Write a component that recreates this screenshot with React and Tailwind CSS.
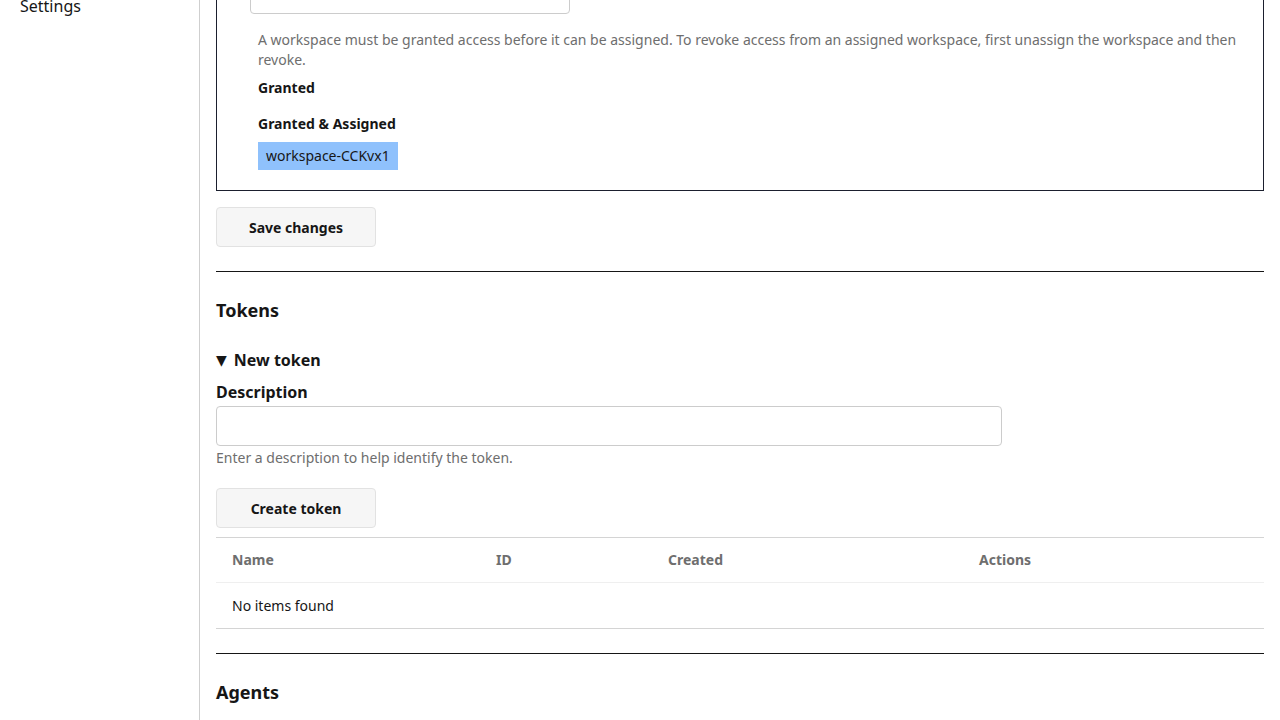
const columns = [
  { label: "Name", width: "w-[264px]" },
  { label: "ID", width: "w-[172px]" },
  { label: "Created", width: "w-[311px]" },
  { label: "Actions", width: "flex-1" },
];

const Button = ({ children }) => (
  <button
    type="button"
    className="flex h-10 w-40 items-center justify-center rounded border border-[#e2e2e2] bg-[#f6f6f6] pt-px text-sm font-bold text-[#161616]"
  >
    {children}
  </button>
);

const App = () => {
  return (
    <div
      className="flex h-screen overflow-hidden bg-white text-[#161616]"
      style={{ fontFamily: '"Noto Sans", "DejaVu Sans", sans-serif' }}
    >
      <aside className="w-[200px] shrink-0 border-r border-[#cfcfcf]">
        <nav className="-mt-[6px] px-5">
          <p className="text-base leading-6">Settings</p>
        </nav>
      </aside>

      <main className="flex-1 px-4">
        <div className="-mt-[60px] border border-[#1b1f2e] pb-5 pr-5 pt-[33px]">
          <div className="ml-[33px] h-10 w-80 rounded border border-[#cccccc]" />
          <div className="pl-[41px]">
            <p className="mt-4 text-sm leading-5 text-[#6e6e6e]">
              A workspace must be granted access before it can be assigned. To
              revoke access from an assigned workspace, first unassign the
              workspace and then revoke.
            </p>
            <p className="mt-2 text-sm font-bold leading-5">Granted</p>
            <p className="mt-4 text-sm font-bold leading-5">Granted &amp; Assigned</p>
            <div className="mt-2 flex">
              <span className="flex h-7 items-center bg-[#8fc1fc] px-2 text-sm text-[#161616]">
                workspace-CCKvx1
              </span>
            </div>
          </div>
        </div>

        <div className="mt-4">
          <Button>Save changes</Button>
        </div>

        <hr className="mt-6 border-t border-[#161616]" />

        <h2 className="mt-6 text-lg font-bold leading-7">Tokens</h2>

        <div className="mt-6 flex items-center gap-[7px] text-base font-bold leading-6">
          <span className="text-[14px] leading-6">▼</span>
          <span>New token</span>
        </div>

        <label className="mt-2 block text-base font-bold leading-6">Description</label>
        <input
          type="text"
          className="mt-[2px] block h-10 w-[786px] rounded border border-[#cccccc] px-2 text-sm outline-none"
        />
        <p className="mt-[2px] text-sm leading-5 text-[#6e6e6e]">
          Enter a description to help identify the token.
        </p>

        <div className="mt-5">
          <Button>Create token</Button>
        </div>

        <div className="mt-[9px] border-y border-[#d4d4d4]">
          <div className="flex h-[45px] items-center border-b border-[#efefef]">
            {columns.map((col) => (
              <div
                key={col.label}
                className={`${col.width} px-4 text-sm font-bold text-[#6e6e6e]`}
              >
                {col.label}
              </div>
            ))}
          </div>
          <div className="flex h-[45px] items-center px-4 text-sm">No items found</div>
        </div>

        <hr className="mt-6 border-t border-[#161616]" />

        <h2 className="mt-6 text-lg font-bold leading-7">Agents</h2>
      </main>
    </div>
  );
};

export default App;
